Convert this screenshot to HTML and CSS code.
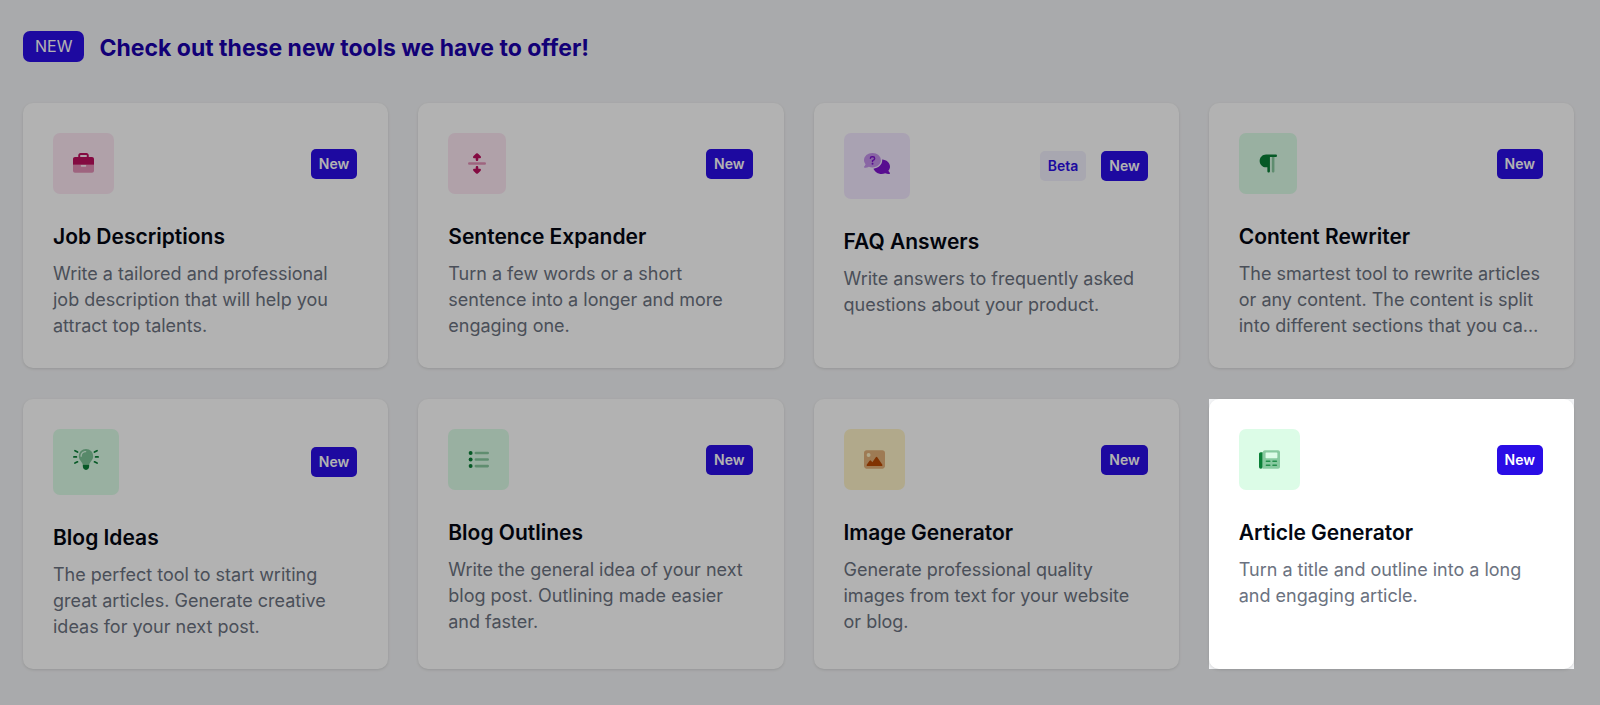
FILE: index.html
```
<!DOCTYPE html>
<html lang="en">
<head>
    <meta charset="UTF-8">
    <meta name="viewport" content="width=device-width, initial-scale=1.0">
    <title>New Tools</title>
    <link rel="stylesheet" href="styles.css">
</head>
<body>

    <section class="tools">
        <div class="tools-header">
            <span class="header-badge">NEW</span>
            <h1>Check out these new tools we have to offer!</h1>
        </div>

        <div class="tools-grid">
            <a class="card" href="#">
                <div class="card-top">
                    <div class="icon pink">
                        <svg width="21" height="21" viewBox="0 0 512 512" fill="currentColor">
                            <path fill-rule="evenodd" d="M128 56C128 25 153 0 184 0H328C359 0 384 25 384 56V96H464C490 96 512 118 512 144V288H0V144C0 118 22 96 48 96H128ZM176 96H336V56C336 51 333 48 328 48H184C179 48 176 51 176 56Z"/>
                            <path opacity=".4" d="M0 288H192V320C192 329 199 336 208 336H304C313 336 320 329 320 320V288H512V432C512 458 490 480 464 480H48C22 480 0 458 0 432Z"/>
                        </svg>
                    </div>
                    <div class="badges"><span class="badge">New</span></div>
                </div>
                <h2>Job Descriptions</h2>
                <p>Write a tailored and professional job description that will help you attract top talents.</p>
            </a>

            <a class="card" href="#">
                <div class="card-top">
                    <div class="icon pink">
                        <svg width="18" height="21" viewBox="0 0 448 512" fill="currentColor">
                            <path d="M202 9Q224-9 246 9L310 72C336 100 320 128 288 128H256V160C256 178 242 192 224 192S192 178 192 160V128H160C128 128 112 100 138 72ZM202 503Q224 521 246 503L310 440C336 412 320 384 288 384H256V352C256 334 242 320 224 320S192 334 192 352V384H160C128 384 112 412 138 440Z"/>
                            <rect opacity=".4" y="224" width="448" height="64" rx="32"/>
                        </svg>
                    </div>
                    <div class="badges"><span class="badge">New</span></div>
                </div>
                <h2>Sentence Expander</h2>
                <p>Turn a few words or a short sentence into a longer and more engaging one.</p>
            </a>

            <a class="card" href="#">
                <div class="card-top">
                    <div class="icon wide purple">
                        <svg width="26" height="21" viewBox="0 0 640 512" fill="currentColor">
                            <path opacity=".4" d="M208 0C323 0 416 79 416 176S323 352 208 352C176 352 146 346 119 335C94 350 57 360 16 360C9 360 3 356 1 350C-2 344 0 337 5 332C20 316 33 294 39 272C15 245 0 212 0 176C0 79 93 0 208 0Z"/>
                            <path fill="none" stroke="currentColor" stroke-width="36" stroke-linecap="round" stroke-linejoin="round" d="M158 128C158 102 174 90 196 90H220C246 90 262 108 262 132C262 162 240 170 210 188V208"/>
                            <circle cx="210" cy="264" r="24"/>
                            <path d="M448 176C448 288 349 370 232 383C265 458 344 512 432 512C464 512 494 506 521 495C546 507 583 512 624 512C631 512 637 508 639 502C642 496 640 489 635 484C620 468 607 450 601 432C625 405 640 372 640 336C640 242 554 166 444 160Q448 168 448 176Z"/>
                        </svg>
                    </div>
                    <div class="badges">
                        <span class="badge beta">Beta</span>
                        <span class="badge">New</span>
                    </div>
                </div>
                <h2>FAQ Answers</h2>
                <p>Write answers to frequently asked questions about your product.</p>
            </a>

            <a class="card" href="#">
                <div class="card-top">
                    <div class="icon green">
                        <svg width="18" height="21" viewBox="0 0 448 512" fill="currentColor">
                            <path d="M416 32H176C88 32 16 104 16 192S88 352 176 352H208V448C208 466 222 480 240 480S272 466 272 448V96H416C434 96 448 82 448 64S434 32 416 32Z"/>
                            <path opacity=".4" d="M320 96H384V448C384 466 370 480 352 480S320 466 320 448Z"/>
                        </svg>
                    </div>
                    <div class="badges"><span class="badge">New</span></div>
                </div>
                <h2>Content Rewriter</h2>
                <p>The smartest tool to rewrite articles or any content. The content is split into different sections that you ca…</p>
            </a>

            <a class="card" href="#">
                <div class="card-top">
                    <div class="icon wide green">
                        <svg width="26" height="21" viewBox="0 0 640 512" fill="currentColor">
                            <path opacity=".45" fill-rule="evenodd" d="M320 0C419 0 496 78 496 174C496 218 480 254 454 286C430 316 406 348 398 384H242C234 348 210 316 186 286C160 254 144 218 144 174C144 78 221 0 320 0ZM216 176C216 120 256 80 312 80C334 80 334 48 312 48C240 48 184 104 184 176C184 198 216 198 216 176Z"/>
                            <path d="M242 384H398V416C398 470 372 512 320 512S242 470 242 416Z"/>
                            <path fill="none" stroke="currentColor" stroke-width="42" stroke-linecap="round" d="M48 40L112 72M22 192H84M48 344L112 312M592 40L528 72M618 192H556M592 344L528 312"/>
                        </svg>
                    </div>
                    <div class="badges"><span class="badge">New</span></div>
                </div>
                <h2>Blog Ideas</h2>
                <p>The perfect tool to start writing great articles. Generate creative ideas for your next post.</p>
            </a>

            <a class="card" href="#">
                <div class="card-top">
                    <div class="icon green">
                        <svg width="21" height="21" viewBox="0 0 512 512" fill="currentColor">
                            <circle cx="64" cy="96" r="48"/>
                            <circle cx="64" cy="256" r="48"/>
                            <circle cx="64" cy="416" r="48"/>
                            <path opacity=".4" fill="none" stroke="currentColor" stroke-width="64" stroke-linecap="round" d="M192 96H480M192 256H480M192 416H480"/>
                        </svg>
                    </div>
                    <div class="badges"><span class="badge">New</span></div>
                </div>
                <h2>Blog Outlines</h2>
                <p>Write the general idea of your next blog post. Outlining made easier and faster.</p>
            </a>

            <a class="card" href="#">
                <div class="card-top">
                    <div class="icon amber">
                        <svg width="21" height="21" viewBox="0 0 512 512" fill="currentColor">
                            <path opacity=".4" fill-rule="evenodd" d="M64 32H448C483 32 512 61 512 96V416C512 451 483 480 448 480H64C29 480 0 451 0 416V96C0 61 29 32 64 32ZM112 96A48 48 0 1 0 112 192A48 48 0 1 0 112 96Z"/>
                            <path d="M324 202Q306 180 288 202L204 326L172 286Q154 266 136 286L70 376C56 396 68 416 90 416H424C446 416 456 396 444 376Z"/>
                        </svg>
                    </div>
                    <div class="badges"><span class="badge">New</span></div>
                </div>
                <h2>Image Generator</h2>
                <p>Generate professional quality images from text for your website or blog.</p>
            </a>

            <!-- Highlighted tool, everything around it is dimmed -->
            <div class="spotlight">
                <a class="card" href="#">
                    <div class="card-top">
                        <div class="icon green">
                            <svg width="21" height="21" viewBox="0 0 512 512" fill="currentColor">
                                <path opacity=".4" fill-rule="evenodd" d="M144 32H464C490 32 512 54 512 80V432C512 458 490 480 464 480H80C96 464 96 448 96 432V80C96 54 118 32 144 32ZM176 88C167 88 160 95 160 104V208C160 217 167 224 176 224H432C441 224 448 217 448 208V104C448 95 441 88 432 88Z"/>
                                <path d="M40 80H88V432C88 460 72 480 44 480S0 458 0 432V120C0 98 18 80 40 80Z"/>
                                <path opacity=".8" fill="none" stroke="currentColor" stroke-width="36" stroke-linecap="round" d="M180 300H264M340 300H424M180 396H264M340 396H424"/>
                            </svg>
                        </div>
                        <div class="badges"><span class="badge">New</span></div>
                    </div>
                    <h2>Article Generator</h2>
                    <p>Turn a title and outline into a long and engaging article.</p>
                </a>
            </div>
        </div>
    </section>

</body>
</html>
```
FILE: styles.css
```
/* Basic reset */
* {
    margin: 0;
    padding: 0;
    box-sizing: border-box;
}

body {
    font-family: 'Inter', 'Open Sans', sans-serif;
    background-color: #f3f4f6;
    color: #030712;
    min-height: 100vh;
}

.tools {
    padding: 31px 26px 36px 23px;
    overflow: hidden;
    min-height: 100vh;
}

.tools-header {
    display: flex;
    align-items: center;
    gap: 15px;
    margin-bottom: 41px;
}

.header-badge {
    background-color: #2a0de6;
    color: white;
    font-size: 16px;
    line-height: 31px;
    padding: 0 12px;
    border-radius: 7px;
}

h1 {
    font-size: 23px;
    line-height: 28px;
    font-weight: 700;
    padding-top: 3px;
    color: #1a00ab;
}

.tools-grid {
    display: grid;
    grid-template-columns: repeat(4, 1fr);
    gap: 31px 30px;
}

.card {
    display: block;
    background-color: white;
    padding: 30px 31px 29px 30px;
    border-radius: 10px;
    box-shadow: 0 1px 3px rgba(0, 0, 0, 0.12);
    color: inherit;
    text-decoration: none;
}

/* Dims the rest of the page */
.spotlight {
    display: grid;
    position: relative;
    z-index: 1;
    background-color: #f3f4f6;
    box-shadow: 0 0 0 200vmax rgba(0, 0, 0, 0.3);
}

.card-top {
    display: flex;
    justify-content: space-between;
    align-items: center;
    margin-bottom: 29px;
}

.icon {
    padding: 20px;
    border-radius: 7px;
}

.icon.wide {
    padding-bottom: 25px;
}

.icon svg {
    display: block;
}

.pink {
    background-color: #fce7f3;
    color: #be0f5d;
}

.purple {
    background-color: #f3e8ff;
    color: #7e14ce;
}

.green {
    background-color: #dcfce7;
    color: #0a8037;
}

.amber {
    background-color: #fef3c7;
    color: #b94a04;
}

.badges {
    display: flex;
    gap: 15px;
}

.badge {
    background-color: #2a0de6;
    color: white;
    font-size: 14px;
    line-height: 30px;
    font-weight: 600;
    padding: 0 8px;
    border-radius: 5px;
}

.badge.beta {
    background-color: #f1effc;
    color: #2a0de6;
}

h2 {
    font-size: 21px;
    line-height: 28px;
    font-weight: 600;
    margin-bottom: 10px;
}

p {
    font-size: 18px;
    line-height: 26px;
    color: #6b7280;
}

@media (max-width: 1100px) {
    .tools-grid {
        grid-template-columns: repeat(2, 1fr);
    }
}
```
